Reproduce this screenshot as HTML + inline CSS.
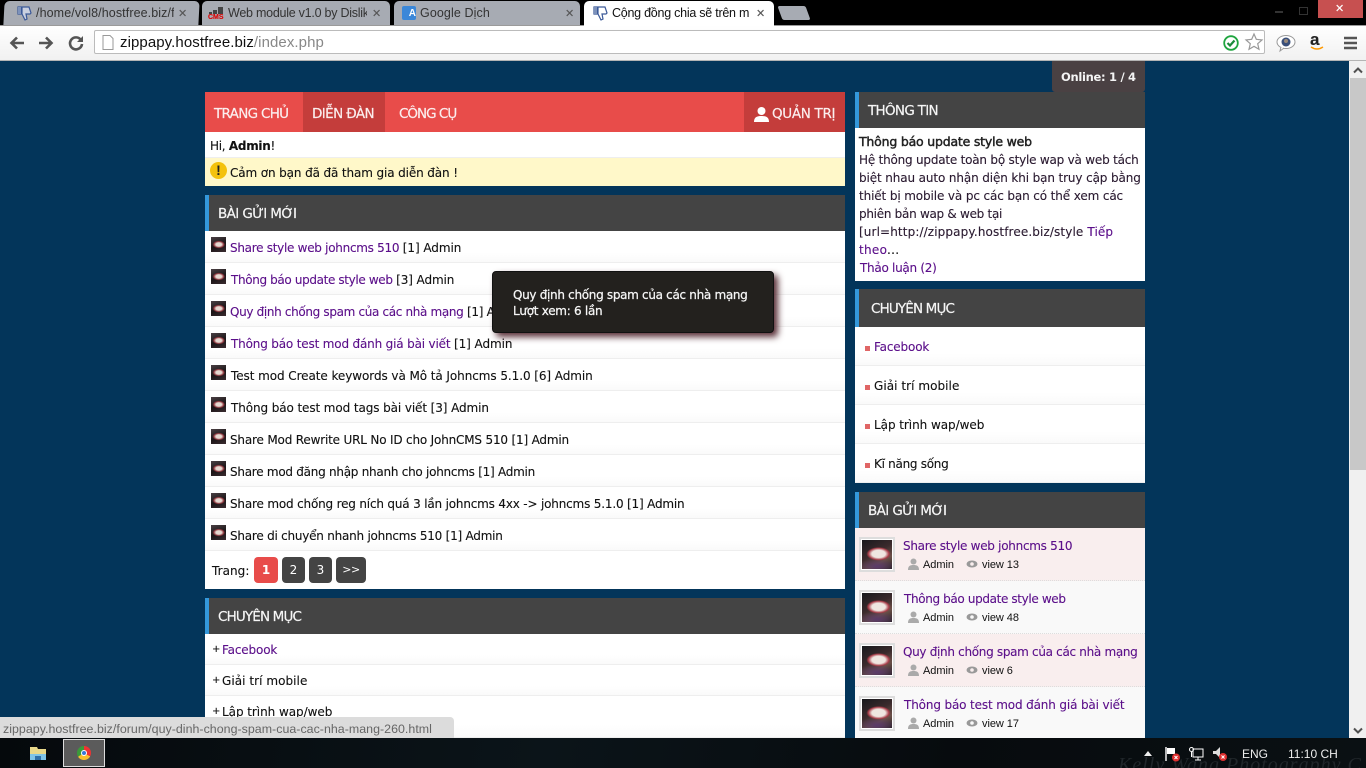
<!DOCTYPE html>
<html><head><meta charset="utf-8"><title>Cộng đồng chia sẽ trên mobile</title>
<style>
html,body{margin:0;padding:0;width:1366px;height:768px;overflow:hidden;background:#03355a}
body{position:relative;font-family:"DejaVu Sans","Liberation Sans",sans-serif;font-size:12px;color:#111}
.a,.t{position:absolute}
.t{white-space:nowrap;letter-spacing:-.28px;line-height:16px;-webkit-text-stroke:.12px currentColor}
.l{color:#5b0f8a}
.h{color:#f6f6f6;font-size:13.5px;letter-spacing:-.6px;-webkit-text-stroke:.2px currentColor}
.tab{font-family:"Liberation Sans",sans-serif;font-size:12.5px;letter-spacing:.1px;color:#333;overflow:hidden}
.x{color:#555;font-size:11px;font-weight:bold}
.hd{position:absolute;background:#444;border-left:4px solid #3498db;box-sizing:border-box}
.row{position:absolute;border-bottom:1px solid #eee;box-sizing:border-box;background:linear-gradient(#fff 70%,#fafafa)}
.ic{position:absolute;width:15px;height:15px;background:radial-gradient(ellipse 42% 26% at 52% 50%,#e6d8d0 0 45%,#8a3038 80%,transparent 100%),linear-gradient(160deg,#4a4044,#1a1416 55%,#3a2c30)}
.th{position:absolute;border:2px solid #ddd;box-shadow:inset 0 0 0 1px #fff;background:radial-gradient(ellipse 38% 22% at 55% 48%,#efe6e0 0 55%,#a83c48 85%,transparent 100%),radial-gradient(ellipse 60% 25% at 50% 88%,#5a3a6a,transparent),linear-gradient(150deg,#15171b,#3a2a2c 45%,#6a5048 70%,#1e1a20)}
.m{font-family:"Liberation Sans",sans-serif;font-size:11px;letter-spacing:-.05px;color:#111;-webkit-text-stroke:0}
.pg{position:absolute;top:557px;height:26px;background:#444;border-radius:4px;color:#fff;text-align:center;line-height:26px;font-size:12px}
.sq{position:absolute;left:865px;width:5px;height:5px;background:#e06666}
svg{position:absolute;overflow:visible}
</style></head><body>

<!-- chrome -->
<div class="a" style="left:0;top:0;width:1366px;height:25px;background:#000"></div>
<div class="a" style="left:4px;top:1px;width:195px;height:24px;background:#a7abb3;border-radius:5px 5px 0 0;transform:skewX(-3deg)"></div>
<div class="a" style="left:202px;top:1px;width:188px;height:24px;background:#a7abb3;border-radius:5px 5px 0 0"></div>
<div class="a" style="left:394px;top:1px;width:186px;height:24px;background:#a7abb3;border-radius:5px 5px 0 0"></div>
<div class="a" style="left:584px;top:1px;width:190px;height:25px;background:#fff;border-radius:5px 5px 0 0"></div>
<div class="a" style="left:780px;top:6px;width:28px;height:14px;background:#a7abb3;border-radius:2px;transform:skewX(20deg)"></div>
<svg style="left:17px;top:5px" width="16" height="16" viewBox="0 0 16 16"><path d="M1 2h3v7H1zM5 2h7l2 6-1 1H9l1 5-2 1-3-6z" fill="#c9d0e0" stroke="#3b5998" stroke-width="1.2"/><path d="M1 2h3v7H1z" fill="#7d92bb"/></svg>
<div class="t tab" style="left:36px;top:5px;width:138px;-webkit-text-stroke:0">/home/vol8/hostfree.biz/f</div>
<div class="t x" style="left:178px;top:6px">✕</div>
<svg style="left:209px;top:6px" width="16" height="16"><rect x="9" y="1" width="5" height="7" fill="#444"/><rect x="4" y="4" width="4" height="4" fill="#444"/><rect x="0" y="6" width="3" height="2" fill="#444"/></svg>
<div class="t" style="left:208px;top:14px;color:#d00;font:bold 7px/8px 'Liberation Sans';letter-spacing:0">CMS</div>
<div class="t tab" style="left:228px;top:5px;width:139px;letter-spacing:-.25px;-webkit-text-stroke:0">Web module v1.0 by Dislik</div>
<div class="t x" style="left:372px;top:6px">✕</div>
<div class="a" style="left:402px;top:6px;width:14px;height:14px;background:#3b87d8;border-radius:2px;color:#fff;font:bold 10px/16px 'Liberation Sans';text-align:right">A</div>
<div class="t tab" style="left:420px;top:5px;-webkit-text-stroke:0">Google Dịch</div>
<div class="t x" style="left:565px;top:6px">✕</div>
<svg style="left:593px;top:5px" width="16" height="16" viewBox="0 0 16 16"><path d="M1 2h3v7H1zM5 2h7l2 6-1 1H9l1 5-2 1-3-6z" fill="#fff" stroke="#3b5998" stroke-width="1.2"/><path d="M1 2h3v7H1z" fill="#7d92bb"/></svg>
<div class="t tab" style="left:612px;top:5px;width:137px;color:#111;letter-spacing:-.25px;-webkit-text-stroke:0">Cộng đồng chia sẽ trên m</div>
<div class="t x" style="left:756px;top:6px">✕</div>
<div class="a" style="left:1318px;top:0;width:45px;height:18px;background:#c75050"></div>
<div class="t" style="left:1335px;top:1px;color:#fff;font-size:11px;font-weight:bold">✕</div>
<div class="a" style="left:1275px;top:11px;width:8px;height:2px;background:#333"></div>
<div class="a" style="left:1299px;top:7px;width:7px;height:6px;border:1px solid #333"></div>

<div class="a" style="left:0;top:25px;width:1366px;height:35px;background:linear-gradient(#fff,#f1f1f1);border-bottom:1px solid #b4b4b4"></div>
<div class="a" style="left:0;top:25px;width:584px;height:1px;background:#9a9a9a"></div>
<div class="a" style="left:774px;top:25px;width:592px;height:1px;background:#9a9a9a"></div>
<svg style="left:9px;top:35px" width="76" height="16" viewBox="0 0 76 16" fill="none" stroke="#555" stroke-width="2.6"><path d="M15 8H3M8 2.5 2.5 8 8 13.5"/><path d="M30 8h12M37 2.5 42.5 8 37 13.5"/><path d="M72 5a6 6 0 1 0 1 4"/><path d="M74 1v6h-6z" fill="#555" stroke="none"/></svg>
<div class="a" style="left:94px;top:30px;width:1171px;height:24px;background:#fff;border:1px solid #bbb;border-radius:2px;box-sizing:border-box"></div>
<svg style="left:102px;top:35px" width="12" height="15"><path d="M1 .5h7l3 3v11H1z" fill="#fff" stroke="#999"/></svg>
<div class="t" style="left:120px;top:34px;font:15px/18px 'Liberation Sans';letter-spacing:.08px;color:#111;-webkit-text-stroke:0">zippapy.hostfree.biz<span style="color:#888">/index.php</span></div>
<svg style="left:1223px;top:35px" width="16" height="16"><circle cx="8" cy="8" r="6.8" fill="#fff" stroke="#1fa53f" stroke-width="1.8"/><path d="M4.5 8 7 10.5 11.5 5.5" fill="none" stroke="#1a8a3a" stroke-width="2.2"/></svg>
<svg style="left:1245px;top:33px" width="18" height="18"><path d="M9 1l2.3 5.3 5.7.6-4.3 3.8 1.3 5.6L9 13.3 4 16.3l1.3-5.6L1 6.9l5.7-.6z" fill="#fff" stroke="#999" stroke-width="1.2"/></svg>
<svg style="left:1276px;top:34px" width="20" height="18"><ellipse cx="10" cy="8" rx="9" ry="6.5" fill="#fff" stroke="#999"/><path d="M5 13l-1 4 4-3" fill="#fff" stroke="#999"/><circle cx="10" cy="8" r="4.5" fill="#3a4f7a"/><circle cx="10" cy="7" r="2" fill="#9a8a7a"/></svg>
<div class="t" style="left:1310px;top:31px;font:bold 17px/18px 'Liberation Sans';letter-spacing:0;color:#222">a</div>
<svg style="left:1310px;top:46px" width="14" height="5"><path d="M1 1q6 4 12 0" fill="none" stroke="#f90" stroke-width="1.4"/></svg>
<svg style="left:1344px;top:36px" width="14" height="14"><path d="M0 2h13M0 7h13M0 12h13" stroke="#555" stroke-width="2.6"/></svg>

<!-- scrollbar -->
<div class="a" style="left:1349px;top:61px;width:17px;height:677px;background:#f0f0f0"></div>
<div class="a" style="left:1350px;top:78px;width:16px;height:392px;background:#c8c8c8"></div>
<svg style="left:1353px;top:67px" width="10" height="7"><path d="M1 5.5 5 1.5 9 5.5" fill="none" stroke="#505050" stroke-width="2"/></svg>
<svg style="left:1353px;top:727px" width="10" height="7"><path d="M1 1.5 5 5.5 9 1.5" fill="none" stroke="#505050" stroke-width="2"/></svg>

<!-- online -->
<div class="a" style="left:1052px;top:61px;width:93px;height:31px;background:#4a4143;border-radius:0 0 3px 3px"></div>
<div class="t" style="left:1061px;top:69px;color:#f4f4f4;font-weight:bold;font-size:11.5px;letter-spacing:-.3px;-webkit-text-stroke:0">Online: 1 / 4</div>

<!-- nav -->
<div class="a" style="left:205px;top:92px;width:640px;height:40px;background:#e84c4a"></div>
<div class="a" style="left:303px;top:92px;width:82px;height:40px;background:#c43d3b"></div>
<div class="a" style="left:744px;top:92px;width:101px;height:40px;background:#c43d3b"></div>
<div class="t h" style="left:214px;top:106px;color:#fbeeee;letter-spacing:-.7px">TRANG CHỦ</div>
<div class="t h" style="left:312px;top:106px;color:#fbeeee">DIỄN ĐÀN</div>
<div class="t h" style="left:399px;top:106px;color:#fbeeee;letter-spacing:-1px">CÔNG CỤ</div>
<svg style="left:754px;top:106px" width="15" height="16"><circle cx="7.5" cy="5" r="4" fill="#fff"/><path d="M0 16c0-5 3-6 7.5-6s7.500 1 7.500 6z" fill="#fff"/></svg>
<div class="t h" style="left:772px;top:106px;color:#fbeeee;letter-spacing:-.32px">QUẢN TRỊ</div>

<div class="a" style="left:205px;top:132px;width:640px;height:25px;background:#fff"></div>
<div class="t" style="left:210px;top:138px">Hi, <b>Admin</b>!</div>
<div class="a" style="left:205px;top:157px;width:640px;height:29px;background:#fff8c9;border-top:1px solid #eee;box-sizing:border-box"></div>
<div class="a" style="left:210px;top:162px;width:17px;height:17px;border-radius:50%;background:#f4c20d;color:#222;font:bold 14px/17px 'Liberation Sans';text-align:center">!</div>
<div class="t" style="left:230px;top:165px;letter-spacing:-.12px">Cảm ơn bạn đã đã tham gia diễn đàn !</div>

<!-- left list -->
<div class="hd" style="left:205px;top:195px;width:640px;height:36px"></div>
<div class="t h" style="left:218px;top:206px">BÀI GỬI MỚI</div>

<div class="row" style="left:205px;top:231px;width:640px;height:32px"></div>
<div class="row" style="left:205px;top:263px;width:640px;height:32px"></div>
<div class="row" style="left:205px;top:295px;width:640px;height:32px"></div>
<div class="row" style="left:205px;top:327px;width:640px;height:32px"></div>
<div class="row" style="left:205px;top:359px;width:640px;height:32px"></div>
<div class="row" style="left:205px;top:391px;width:640px;height:32px"></div>
<div class="row" style="left:205px;top:423px;width:640px;height:32px"></div>
<div class="row" style="left:205px;top:455px;width:640px;height:32px"></div>
<div class="row" style="left:205px;top:487px;width:640px;height:32px"></div>
<div class="row" style="left:205px;top:519px;width:640px;height:32px"></div>

<div class="ic" style="left:211px;top:237px"></div><div class="t" style="left:230px;top:240px"><span class="l">Share style web johncms 510</span> <span style="letter-spacing:-.06px">[1] Admin</span></div>
<div class="ic" style="left:211px;top:269px"></div><div class="t" style="left:231px;top:272px"><span class="l" style="letter-spacing:-.36px">Thông báo update style web</span> <span style="letter-spacing:-.1px">[3] Admin</span></div>
<div class="ic" style="left:211px;top:301px"></div><div class="t" style="left:230px;top:304px"><span class="l" style="letter-spacing:-.34px">Quy định chống spam của các nhà mạng</span> [1] Admin</div>
<div class="ic" style="left:211px;top:333px"></div><div class="t" style="left:231px;top:336px"><span class="l" style="letter-spacing:-.17px">Thông báo test mod đánh giá bài viết</span> <span style="letter-spacing:-.06px">[1] Admin</span></div>
<div class="ic" style="left:211px;top:365px"></div><div class="t" style="left:231px;top:368px;letter-spacing:-.07px">Test mod Create keywords và Mô tả Johncms 5.1.0 [6] Admin</div>
<div class="ic" style="left:211px;top:397px"></div><div class="t" style="left:231px;top:400px;letter-spacing:-.1px">Thông báo test mod tags bài viết [3] Admin</div>
<div class="ic" style="left:211px;top:429px"></div><div class="t" style="left:230px;top:432px;letter-spacing:-.18px">Share Mod Rewrite URL No ID cho JohnCMS 510 [1] Admin</div>
<div class="ic" style="left:211px;top:461px"></div><div class="t" style="left:230px;top:464px;letter-spacing:-.26px">Share mod đăng nhập nhanh cho johncms [1] Admin</div>
<div class="ic" style="left:211px;top:493px"></div><div class="t" style="left:230px;top:496px;letter-spacing:-.18px">Share mod chống reg ních quá 3 lần johncms 4xx -&gt; johncms 5.1.0 [1] Admin</div>
<div class="ic" style="left:211px;top:525px"></div><div class="t" style="left:230px;top:528px;letter-spacing:-.23px">Share di chuyển nhanh johncms 510 [1] Admin</div>

<div class="a" style="left:205px;top:551px;width:640px;height:38px;background:#fff"></div>
<div class="t" style="left:212px;top:563px;letter-spacing:.05px">Trang:</div>
<div class="pg" style="left:254px;width:24px;background:#e84c4a;font-weight:bold">1</div>
<div class="pg" style="left:282px;width:23px">2</div>
<div class="pg" style="left:309px;width:23px">3</div>
<div class="pg" style="left:336px;width:30px;font-size:11px;letter-spacing:-.5px">&gt;&gt;</div>

<div class="hd" style="left:205px;top:598px;width:640px;height:36px"></div>
<div class="t h" style="left:218px;top:609px;letter-spacing:-.85px">CHUYÊN MỤC</div>
<div class="row" style="left:205px;top:634px;width:640px;height:31px"></div>
<div class="row" style="left:205px;top:665px;width:640px;height:31px"></div>
<div class="row" style="left:205px;top:696px;width:640px;height:42px"></div>
<div class="t" style="left:212px;top:642px;font-size:10px">+</div><div class="t" style="left:222px;top:642px;letter-spacing:-.15px"><span class="l">Facebook</span></div>
<div class="t" style="left:212px;top:673px;font-size:10px">+</div><div class="t" style="left:222px;top:673px;letter-spacing:.05px">Giải trí mobile</div>
<div class="t" style="left:212px;top:704px;font-size:10px">+</div><div class="t" style="left:222px;top:704px;letter-spacing:-.05px">Lập trình wap/web</div>

<!-- right -->
<div class="hd" style="left:855px;top:92px;width:290px;height:36px"></div>
<div class="t h" style="left:868px;top:103px;letter-spacing:-.7px">THÔNG TIN</div>
<div class="a" style="left:855px;top:128px;width:290px;height:153px;background:#fff"></div>
<div class="t" style="left:859px;top:134px;color:#222;font-size:12.5px;letter-spacing:-.2px;-webkit-text-stroke:.45px #222">Thông báo update style web</div>
<div class="t" style="left:859px;top:152px;color:#2a1a30;letter-spacing:-.21px">Hệ thông update toàn bộ style wap và web tách</div>
<div class="t" style="left:859px;top:170px;color:#2a1a30;letter-spacing:-.12px">biệt nhau auto nhận diện khi bạn truy cập bằng</div>
<div class="t" style="left:859px;top:188px;color:#2a1a30;letter-spacing:-.12px">thiết bị mobile và pc các bạn có thể xem các</div>
<div class="t" style="left:859px;top:206px;color:#2a1a30">phiên bản wap &amp; web tại</div>
<div class="t" style="left:859px;top:224px;color:#2a1a30;letter-spacing:.12px">[url=http://zippapy.hostfree.biz/style <span class="l">Tiếp</span></div>
<div class="t" style="left:859px;top:242px;letter-spacing:.3px"><span class="l">theo</span>...</div>
<div class="t" style="left:860px;top:260px"><span class="l">Thảo luận</span> <span class="l">(2)</span></div>

<div class="hd" style="left:855px;top:289px;width:290px;height:38px"></div>
<div class="t h" style="left:871px;top:301px;letter-spacing:-.85px">CHUYÊN MỤC</div>
<div class="row" style="left:855px;top:327px;width:290px;height:39px"></div>
<div class="row" style="left:855px;top:366px;width:290px;height:39px"></div>
<div class="row" style="left:855px;top:405px;width:290px;height:39px"></div>
<div class="row" style="left:855px;top:444px;width:290px;height:39px"></div>
<div class="sq" style="top:346px"></div><div class="t" style="left:874px;top:339px;letter-spacing:-.15px"><span class="l">Facebook</span></div>
<div class="sq" style="top:385px"></div><div class="t" style="left:874px;top:378px;letter-spacing:.05px">Giải trí mobile</div>
<div class="sq" style="top:424px"></div><div class="t" style="left:874px;top:417px;letter-spacing:-.05px">Lập trình wap/web</div>
<div class="sq" style="top:463px"></div><div class="t" style="left:874px;top:456px">Kĩ năng sống</div>

<div class="hd" style="left:855px;top:492px;width:290px;height:36px"></div>
<div class="t h" style="left:868px;top:503px">BÀI GỬI MỚI</div>
<div class="a" style="left:855px;top:528px;width:290px;height:53px;background:#f9eeee;border-bottom:1px dotted #ddd;box-sizing:border-box"></div>
<div class="a" style="left:855px;top:581px;width:290px;height:53px;background:#f9f9f9;border-bottom:1px dotted #ddd;box-sizing:border-box"></div>
<div class="a" style="left:855px;top:634px;width:290px;height:53px;background:#f9eeee;border-bottom:1px dotted #ddd;box-sizing:border-box"></div>
<div class="a" style="left:855px;top:687px;width:290px;height:51px;background:#f9f9f9"></div>

<div class="th" style="left:859px;top:537px;width:32px;height:31px"></div>
<div class="th" style="left:859px;top:590px;width:32px;height:31px"></div>
<div class="th" style="left:859px;top:643px;width:32px;height:31px"></div>
<div class="th" style="left:859px;top:696px;width:32px;height:31px"></div>

<div class="t l" style="left:903px;top:538px">Share style web johncms 510</div>
<div class="t l" style="left:904px;top:591px;letter-spacing:-.36px">Thông báo update style web</div>
<div class="t l" style="left:903px;top:644px;letter-spacing:-.31px">Quy định chống spam của các nhà mạng</div>
<div class="t l" style="left:904px;top:697px;letter-spacing:-.14px">Thông báo test mod đánh giá bài viết</div>

<svg style="left:908px;top:558px" width="11" height="12"><circle cx="5.500" cy="3.500" r="3" fill="#aaa"/><path d="M0 12c0-4 2-5 5.500-5s5.500 1 5.500 5z" fill="#aaa"/></svg>
<svg style="left:966px;top:560px" width="12" height="8"><ellipse cx="6" cy="4" rx="5.500" ry="3.500" fill="#999"/><circle cx="6" cy="4" r="1.800" fill="#f9eeee"/></svg>
<div class="t m" style="left:923px;top:557px">Admin</div><div class="t m" style="left:982px;top:557px">view 13</div>
<svg style="left:908px;top:611px" width="11" height="12"><circle cx="5.500" cy="3.500" r="3" fill="#aaa"/><path d="M0 12c0-4 2-5 5.500-5s5.500 1 5.500 5z" fill="#aaa"/></svg>
<svg style="left:966px;top:613px" width="12" height="8"><ellipse cx="6" cy="4" rx="5.500" ry="3.500" fill="#999"/><circle cx="6" cy="4" r="1.800" fill="#f9f9f9"/></svg>
<div class="t m" style="left:923px;top:610px">Admin</div><div class="t m" style="left:982px;top:610px">view 48</div>
<svg style="left:908px;top:664px" width="11" height="12"><circle cx="5.500" cy="3.500" r="3" fill="#aaa"/><path d="M0 12c0-4 2-5 5.500-5s5.500 1 5.500 5z" fill="#aaa"/></svg>
<svg style="left:966px;top:666px" width="12" height="8"><ellipse cx="6" cy="4" rx="5.500" ry="3.500" fill="#999"/><circle cx="6" cy="4" r="1.800" fill="#f9eeee"/></svg>
<div class="t m" style="left:923px;top:663px">Admin</div><div class="t m" style="left:982px;top:663px">view 6</div>
<svg style="left:908px;top:717px" width="11" height="12"><circle cx="5.500" cy="3.500" r="3" fill="#aaa"/><path d="M0 12c0-4 2-5 5.500-5s5.500 1 5.500 5z" fill="#aaa"/></svg>
<svg style="left:966px;top:719px" width="12" height="8"><ellipse cx="6" cy="4" rx="5.500" ry="3.500" fill="#999"/><circle cx="6" cy="4" r="1.800" fill="#f9f9f9"/></svg>
<div class="t m" style="left:923px;top:716px">Admin</div><div class="t m" style="left:982px;top:716px">view 17</div>

<!-- tooltip -->
<div class="a" style="left:492px;top:271px;width:282px;height:62px;background:#23211e;border:1px solid #111;border-radius:4px;box-sizing:border-box;box-shadow:4px 4px 7px #5a3038"></div>
<div class="t" style="left:513px;top:287px;color:#f6f6f6;letter-spacing:-.31px;-webkit-text-stroke:.25px #f6f6f6">Quy định chống spam của các nhà mạng</div>
<div class="t" style="left:513px;top:303px;color:#f6f6f6;-webkit-text-stroke:.25px #f6f6f6">Lượt xem: 6 lần</div>

<!-- status -->
<div class="a" style="left:0;top:717px;width:454px;height:21px;background:#dcdcdc;border-radius:0 4px 0 0"></div>
<div class="t" style="left:3px;top:721px;font:12.4px/16px 'Liberation Sans';letter-spacing:.03px;color:#666;-webkit-text-stroke:0">zippapy.hostfree.biz/forum/quy-dinh-chong-spam-cua-cac-nha-mang-260.html</div>

<!-- taskbar -->
<div class="a" style="left:0;top:738px;width:1366px;height:30px;overflow:hidden;background:linear-gradient(100deg,#05090c,#0b1419 40%,#070b0e 70%,#0a1013)">
<div class="t" style="left:1118px;top:17px;font:italic 20px/20px 'Liberation Serif',serif;letter-spacing:1px;color:#20262a;-webkit-text-stroke:0">Kelly Wang Photography C</div>
</div>
<svg style="left:30px;top:746px" width="17" height="15"><path d="M0 1h7l1 2h8v11H0z" fill="#e8d88a"/><rect x="0" y="8" width="16" height="6" fill="#7fc4e8"/><rect x="5" y="10" width="6" height="4" fill="#2e6fa8"/></svg>
<div class="a" style="left:63px;top:739px;width:42px;height:28px;background:#5b5b5b;border:1px solid #ddd;box-sizing:border-box"></div>
<div class="a" style="left:77px;top:746px;width:14px;height:14px;border-radius:50%;background:conic-gradient(#e33 0 33%,#fbc02d 33% 66%,#3a9a3a 66%)"></div>
<div class="a" style="left:81px;top:750px;width:6px;height:6px;border-radius:50%;background:#3b78d8;border:1px solid #fff;box-sizing:border-box"></div>
<svg style="left:1144px;top:751px" width="8" height="5"><path d="M0 5 4 0 8 5z" fill="#eee"/></svg>
<svg style="left:1165px;top:747px" width="16" height="15"><path d="M1 0v14" stroke="#fff" stroke-width="1.400"/><path d="M2 1h8v6H2z" fill="#fff"/><circle cx="11" cy="10.500" r="4" fill="#e03030"/><path d="M9.500 9 12.500 12M12.500 9 9.500 12" stroke="#fff"/></svg>
<svg style="left:1189px;top:747px" width="15" height="14"><rect x="4" y="2" width="10" height="8" fill="none" stroke="#fff"/><circle cx="2.500" cy="2.500" r="2" fill="none" stroke="#fff"/><path d="M2.500 5v5M6 13h6M9 10v3" stroke="#fff"/></svg>
<svg style="left:1213px;top:747px" width="16" height="15"><path d="M0 4h3l4-4v11L3 7H0z" fill="#ddd"/><circle cx="10" cy="10" r="4" fill="#e03030"/><path d="M8.500 8.500 11.500 11.500M11.500 8.500 8.500 11.500" stroke="#fff"/></svg>
<div class="t" style="left:1242px;top:746px;color:#eee;font:12px/16px 'Liberation Sans';letter-spacing:0;-webkit-text-stroke:0">ENG</div>
<div class="t" style="left:1288px;top:746px;color:#eee;font:12px/16px 'Liberation Sans';letter-spacing:0;-webkit-text-stroke:0">11:10 CH</div>
</body></html>
